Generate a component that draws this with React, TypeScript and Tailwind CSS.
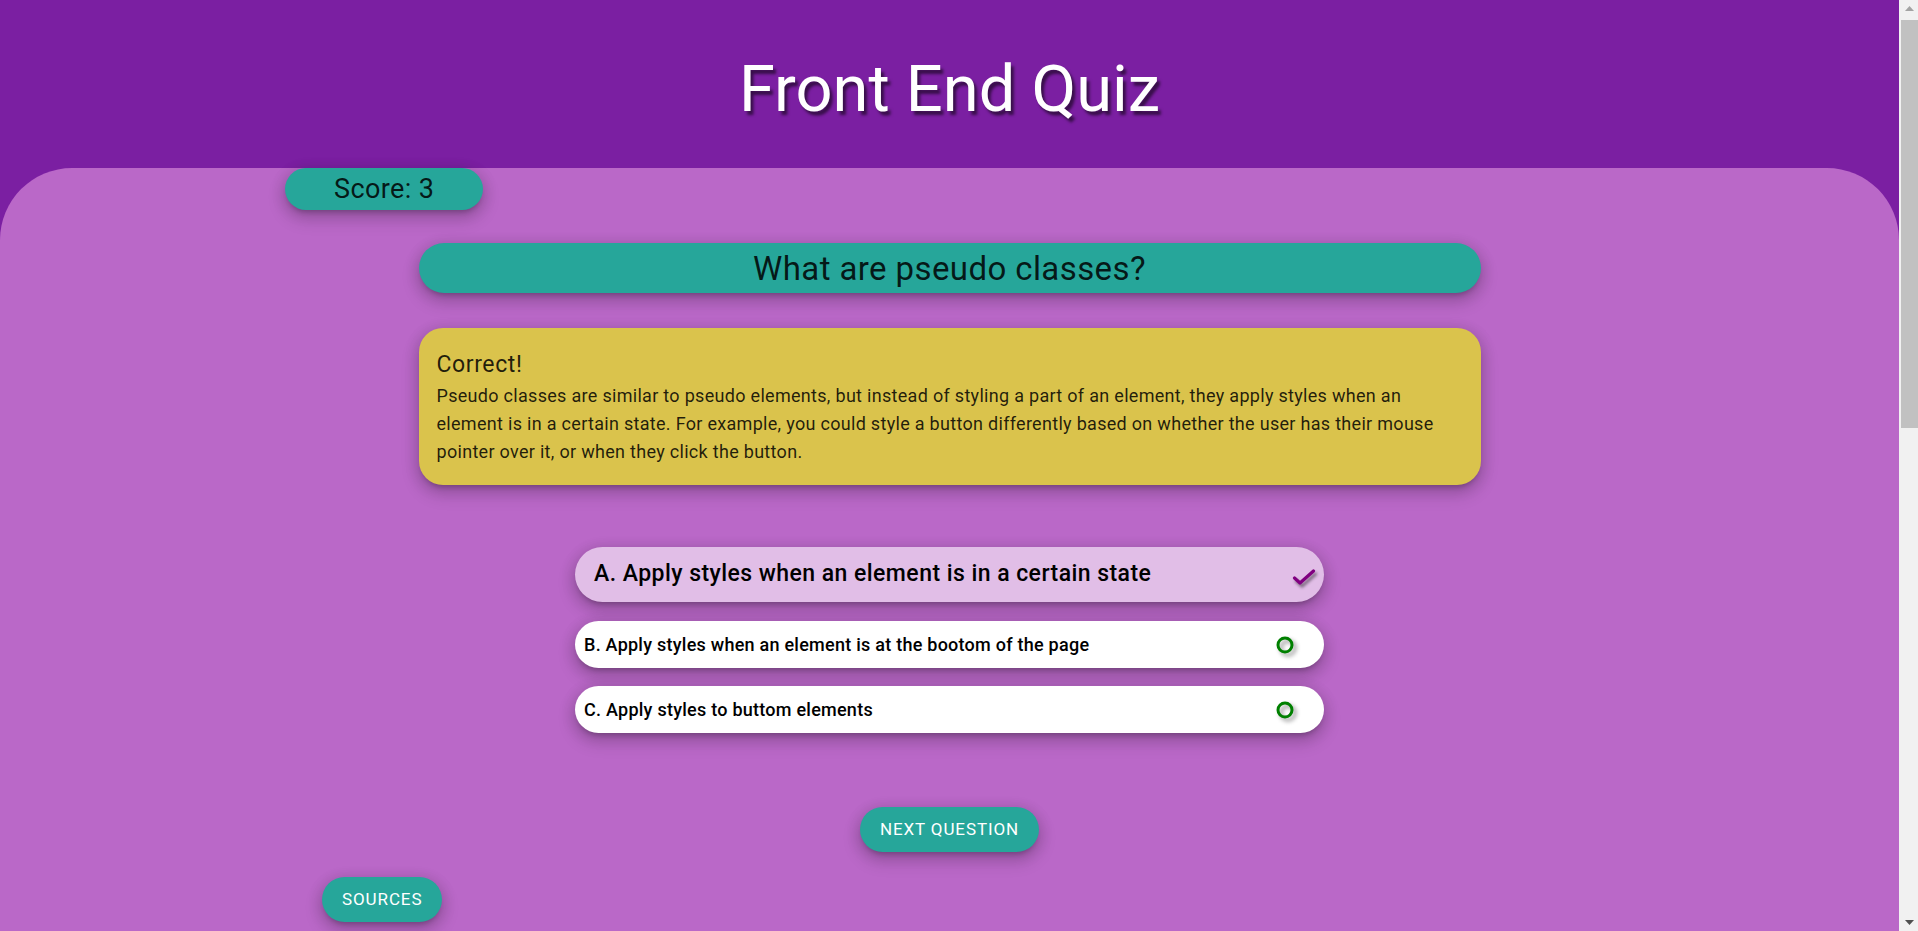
import React from 'react';

const shadow =
  'shadow-[0_8px_17px_2px_rgba(0,0,0,0.14),0_3px_14px_2px_rgba(0,0,0,0.12),0_5px_5px_-3px_rgba(0,0,0,0.2)]';

const answers = [
  { letter: 'A', text: 'Apply styles when an element is in a certain state', selected: true },
  { letter: 'B', text: 'Apply styles when an element is at the bootom of the page', selected: false },
  { letter: 'C', text: 'Apply styles to buttom elements', selected: false },
];

const Check = () => (
  <svg width="25" height="22" viewBox="0 0 25 22" className="mt-[5px] [filter:drop-shadow(2px_3px_1.5px_rgba(0,0,0,0.45))]">
    <path d="M2.5 12 L8 17 L21.5 5" fill="none" stroke="#800080" strokeWidth="3.2" strokeLinecap="round" strokeLinejoin="round" />
  </svg>
);

const Ring = () => (
  <svg width="22" height="22" viewBox="0 0 22 22" className="mt-[4px] [filter:drop-shadow(3px_3px_2px_rgba(0,0,0,0.4))]">
    <circle cx="9" cy="9" r="7" fill="none" stroke="#008000" strokeWidth="3" />
  </svg>
);

const Scrollbar = () => (
  <div className="flex h-screen w-[19px] shrink-0 flex-col bg-[#f1f1f1] pl-[2px]">
    <div className="flex h-[17px] items-center justify-center">
      <svg width="9" height="5" viewBox="0 0 9 5">
        <path d="M0 5 L4.5 0 L9 5 Z" fill="#a3a3a3" />
      </svg>
    </div>
    <div className="mt-[3px] h-[408px] bg-[#c1c1c1]" />
    <div className="flex-1" />
    <div className="flex h-[17px] items-center justify-center">
      <svg width="9" height="5" viewBox="0 0 9 5">
        <path d="M0 0 L4.5 5 L9 0 Z" fill="#505050" />
      </svg>
    </div>
  </div>
);

export default function App() {
  return (
    <div className="flex h-screen overflow-hidden font-['Roboto',sans-serif]">
      <div className="min-w-0 flex-1 overflow-hidden bg-[#7b1fa2]">
        <header className="h-[168px] pt-[52px] text-center">
          <h1 className="text-[65px] leading-[75px] text-white [text-shadow:3px_4px_3px_rgba(0,0,0,0.55)]">
            Front End Quiz
          </h1>
        </header>

        <main className="min-h-[1879px] rounded-t-[72px] bg-[#ba68c8]">
          <div className="pl-[285px]">
            <div className={`inline-block h-[42px] rounded-full bg-[#26a69a] px-[49px] text-[27px] leading-[43px] tracking-[0.4px] text-black/85 ${shadow}`}>
              Score: 3
            </div>
          </div>

          <div className={`mx-auto mt-[33px] h-[50px] w-[1062px] rounded-full bg-[#26a69a] text-center text-[33px] leading-[52px] tracking-[0.4px] text-black/85 ${shadow}`}>
            What are pseudo classes?
          </div>

          <div className={`mx-auto mt-[35px] w-[1062px] rounded-[24px] bg-[#dac34c] px-[18px] pt-[20px] pb-[19px] text-black/85 ${shadow}`}>
            <div className="text-[23px] leading-[34px] tracking-[0.6px]">Correct!</div>
            <p className="text-[18px] leading-[28px] tracking-[0.3px]">
              Pseudo classes are similar to pseudo elements, but instead of styling a part of an element, they apply
              styles when an element is in a certain state. For example, you could style a button differently based on
              whether the user has their mouse pointer over it, or when they click the button.
            </p>
          </div>

          <div className="mx-auto mt-[62px] flex w-[749px] flex-col gap-[18px]">
            {answers.map((a) =>
              a.selected ? (
                <div
                  key={a.letter}
                  className={`mb-[1px] flex h-[55px] items-center justify-between rounded-full bg-[#e1bee7] pl-[19px] pr-[7px] text-[23px] font-medium tracking-[0.45px] text-black ${shadow}`}
                >
                  <span>
                    {a.letter}. {a.text}
                  </span>
                  <Check />
                </div>
              ) : (
                <div
                  key={a.letter}
                  className={`flex h-[47px] items-center justify-between rounded-full bg-white pl-[9px] pr-[26px] text-[18px] font-medium tracking-[0.25px] text-black ${shadow}`}
                >
                  <span>
                    {a.letter}. {a.text}
                  </span>
                  <Ring />
                </div>
              )
            )}
          </div>

          <div className="mt-[74px] flex justify-center">
            <button className={`h-[45px] rounded-full bg-[#26a69a] px-[20px] text-[17px] tracking-[0.9px] text-white uppercase ${shadow}`}>
              Next Question
            </button>
          </div>

          <div className="mt-[25px] pl-[322px]">
            <button className={`h-[45px] rounded-full bg-[#26a69a] px-[20px] text-[17px] tracking-[0.9px] text-white uppercase ${shadow}`}>
              Sources
            </button>
          </div>
        </main>
      </div>
      <Scrollbar />
    </div>
  );
}
